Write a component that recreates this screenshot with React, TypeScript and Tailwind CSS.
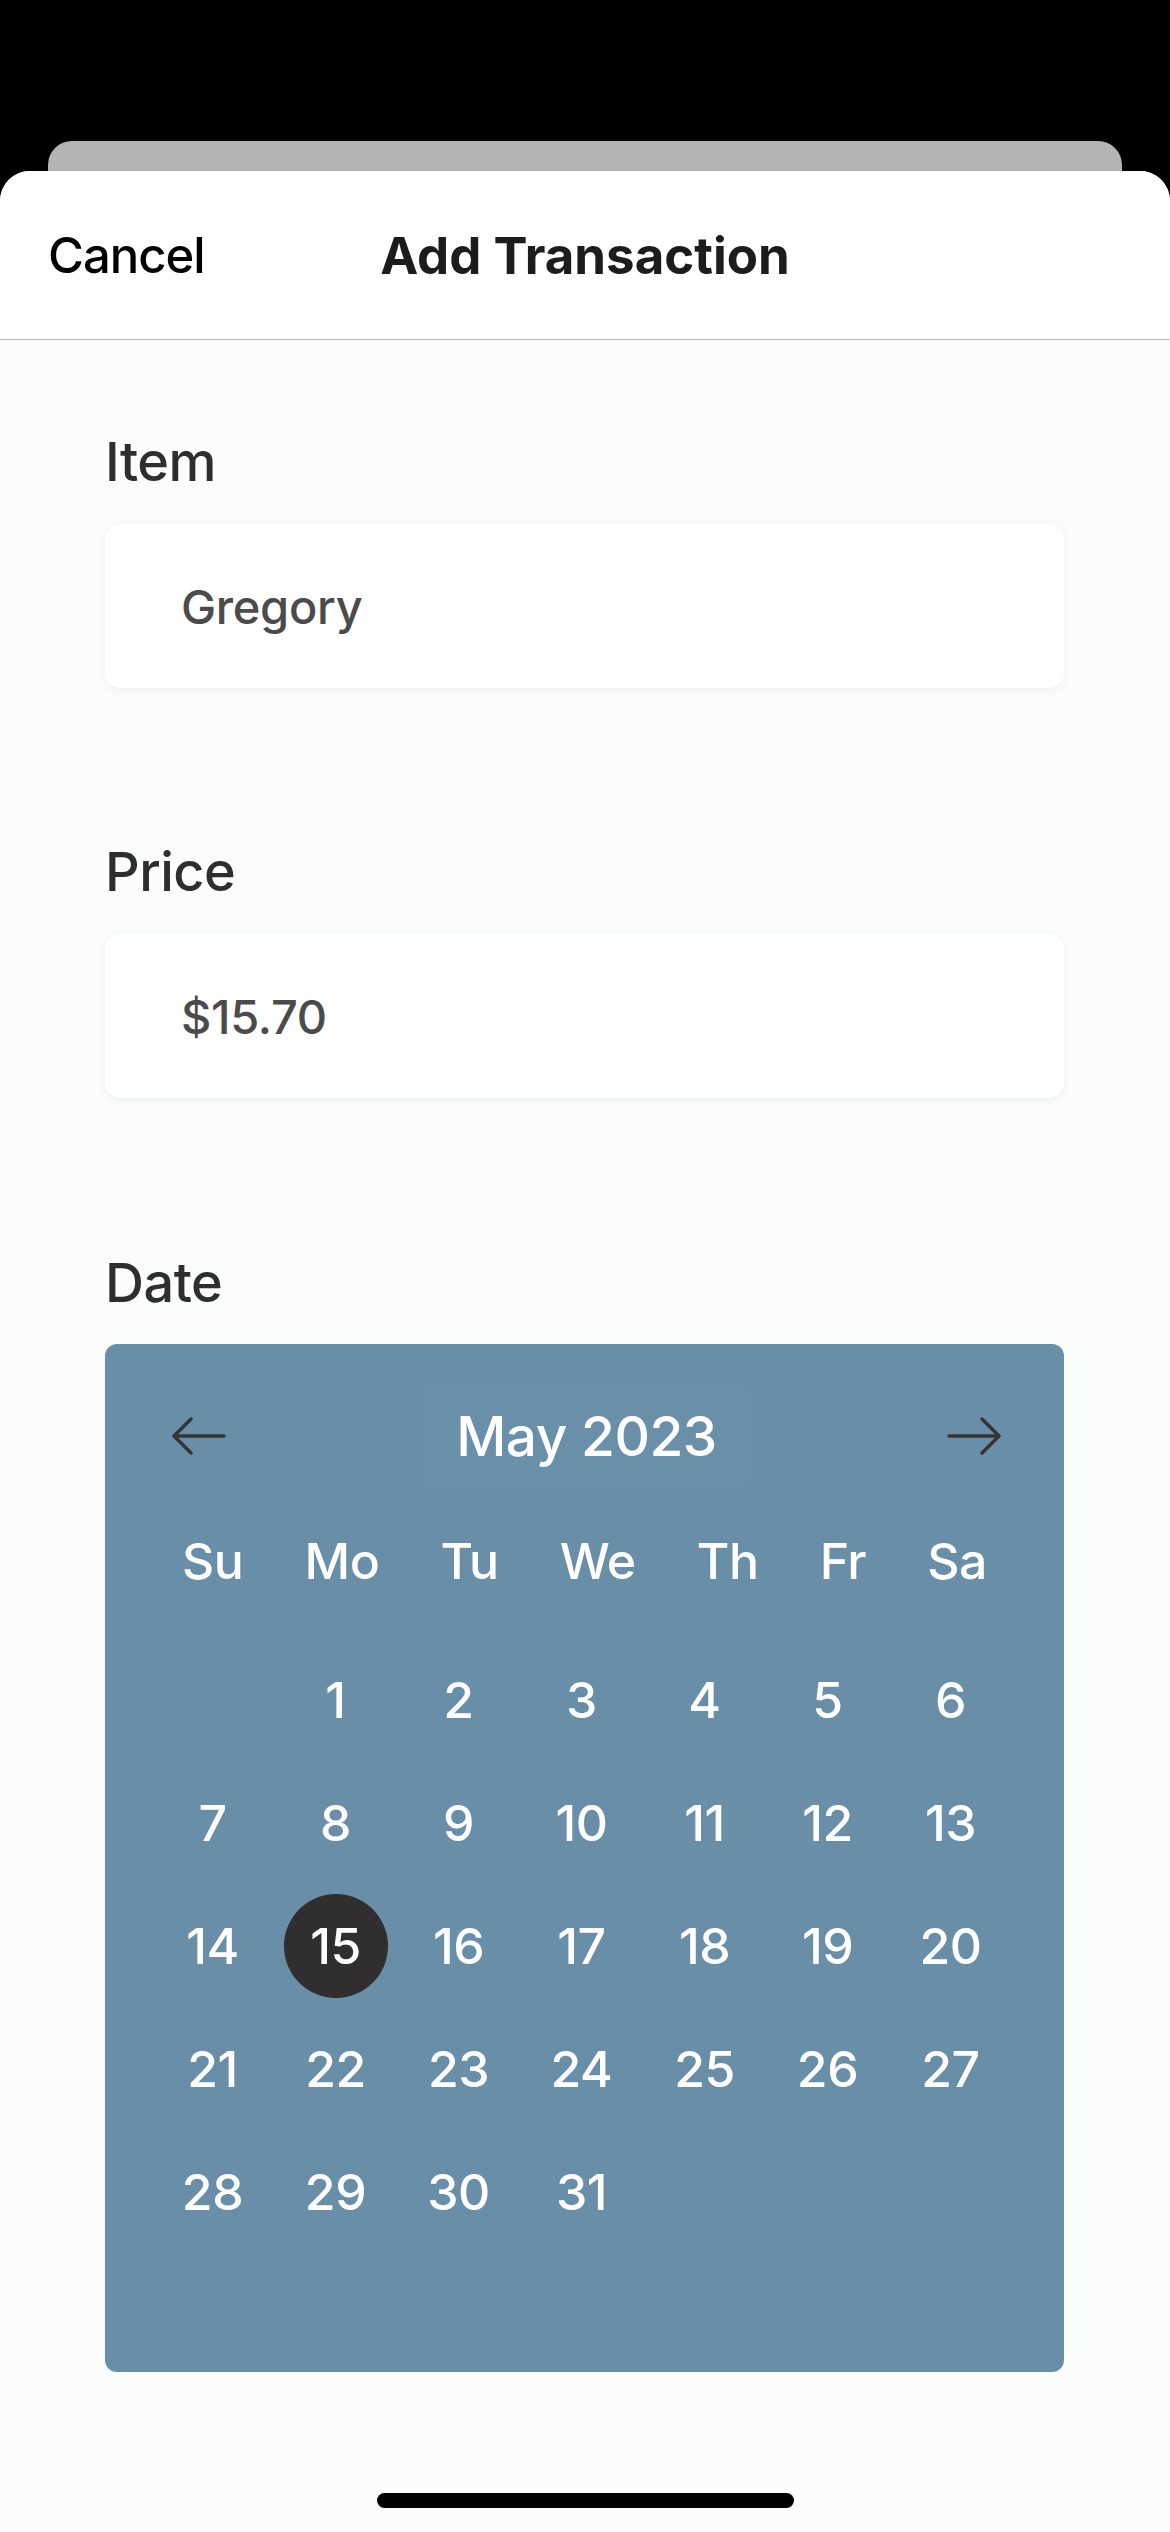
import { useState } from "react";

const weekdays = ["Su", "Mo", "Tu", "We", "Th", "Fr", "Sa"];

// May 2023 starts on a Monday, so one empty cell first
const cells: (number | null)[] = [null, ...Array.from({ length: 31 }, (_, i) => i + 1)];

const Arrow = ({ dir }: { dir: "left" | "right" }) => (
  <svg width="56" height="38" viewBox="0 0 56 38" fill="none" className="text-[#353535]">
    {dir === "left" ? (
      <path d="M3 19H53M20 2L3 19L20 36" stroke="currentColor" strokeWidth="3.4" strokeLinecap="round" strokeLinejoin="round" />
    ) : (
      <path d="M53 19H3M36 2L53 19L36 36" stroke="currentColor" strokeWidth="3.4" strokeLinecap="round" strokeLinejoin="round" />
    )}
  </svg>
);

const Field = ({ label, value }: { label: string; value: string }) => (
  <div className="flex flex-col">
    <label className="text-[54px] leading-none font-medium text-[#302d2e] tracking-[-0.5px]">{label}</label>
    <div className="mt-[35px] h-[164px] rounded-[15px] bg-white shadow-[0_2px_10px_rgba(0,0,0,0.06)] flex items-center pl-[76px]">
      <span className="text-[47px] leading-none font-medium text-[#4b4b4b] tracking-[-0.3px]">{value}</span>
    </div>
  </div>
);

const Calendar = () => {
  const [selected, setSelected] = useState(15);

  return (
    <div className="mt-[34px] h-[1028px] rounded-[12px] bg-[#698ea8] flex flex-col pt-[38px]">
      <div className="h-[108px] flex items-center justify-between pl-[66px] pr-[62px]">
        <Arrow dir="left" />
        <div className="h-[108px] w-[328px] rounded-[8px] bg-white/[0.012] flex items-center justify-center">
          <span className="text-[55px] leading-none font-medium text-white tracking-[-0.5px]">May 2023</span>
        </div>
        <Arrow dir="right" />
      </div>

      <div className="mt-[46px] flex justify-between px-[77px]">
        {weekdays.map((d) => (
          <span key={d} className="text-[50px] leading-none font-medium text-white tracking-[-0.5px]">
            {d}
          </span>
        ))}
      </div>

      <div className="mt-[52px] pl-[46px] grid grid-cols-[repeat(7,123px)] auto-rows-[123px]">
        {cells.map((day, i) => (
          <div key={i} className="flex items-center justify-center">
            {day !== null && (
              <button
                onClick={() => setSelected(day)}
                className={
                  day === selected
                    ? "w-[104px] h-[104px] rounded-full bg-[#312e2f] flex items-center justify-center"
                    : "w-[104px] h-[104px] rounded-full flex items-center justify-center"
                }
              >
                <span className="text-[50px] leading-none font-medium text-white tracking-[-0.5px]">{day}</span>
              </button>
            )}
          </div>
        ))}
      </div>
    </div>
  );
};

export default function App() {
  return (
    <div className="w-full min-h-[2532px] bg-black flex flex-col font-['Inter','Noto_Sans',sans-serif]">
      <div className="h-[141px]" />
      {/* sheet behind */}
      <div className="mx-[48px] h-[30px] rounded-t-[24px] bg-[#b4b4b4]" />

      <div className="flex-1 rounded-t-[30px] bg-[#fbfcfc] overflow-hidden flex flex-col">
        <header className="h-[169px] bg-white border-b border-[#b9b9b9] grid grid-cols-[1fr_auto_1fr] items-center">
          <button className="justify-self-start pl-[48px] text-[49px] leading-none font-medium text-black tracking-[-1px]">Cancel</button>
          <h1 className="text-[51px] leading-none font-bold text-[#1d1c1d] tracking-[0px]">Add Transaction</h1>
          <div />
        </header>

        <div className="pl-[105px] pr-[106px] pt-[95px] flex flex-col">
          <Field label="Item" value="Gregory" />
          <div className="h-[157px]" />
          <Field label="Price" value="$15.70" />
          <div className="h-[158px]" />
          <label className="text-[54px] leading-none font-medium text-[#302d2e] tracking-[-0.5px]">Date</label>
          <Calendar />
        </div>

        <div className="mt-[121px] mx-auto w-[417px] h-[15px] rounded-full bg-black" />
      </div>
    </div>
  );
}
